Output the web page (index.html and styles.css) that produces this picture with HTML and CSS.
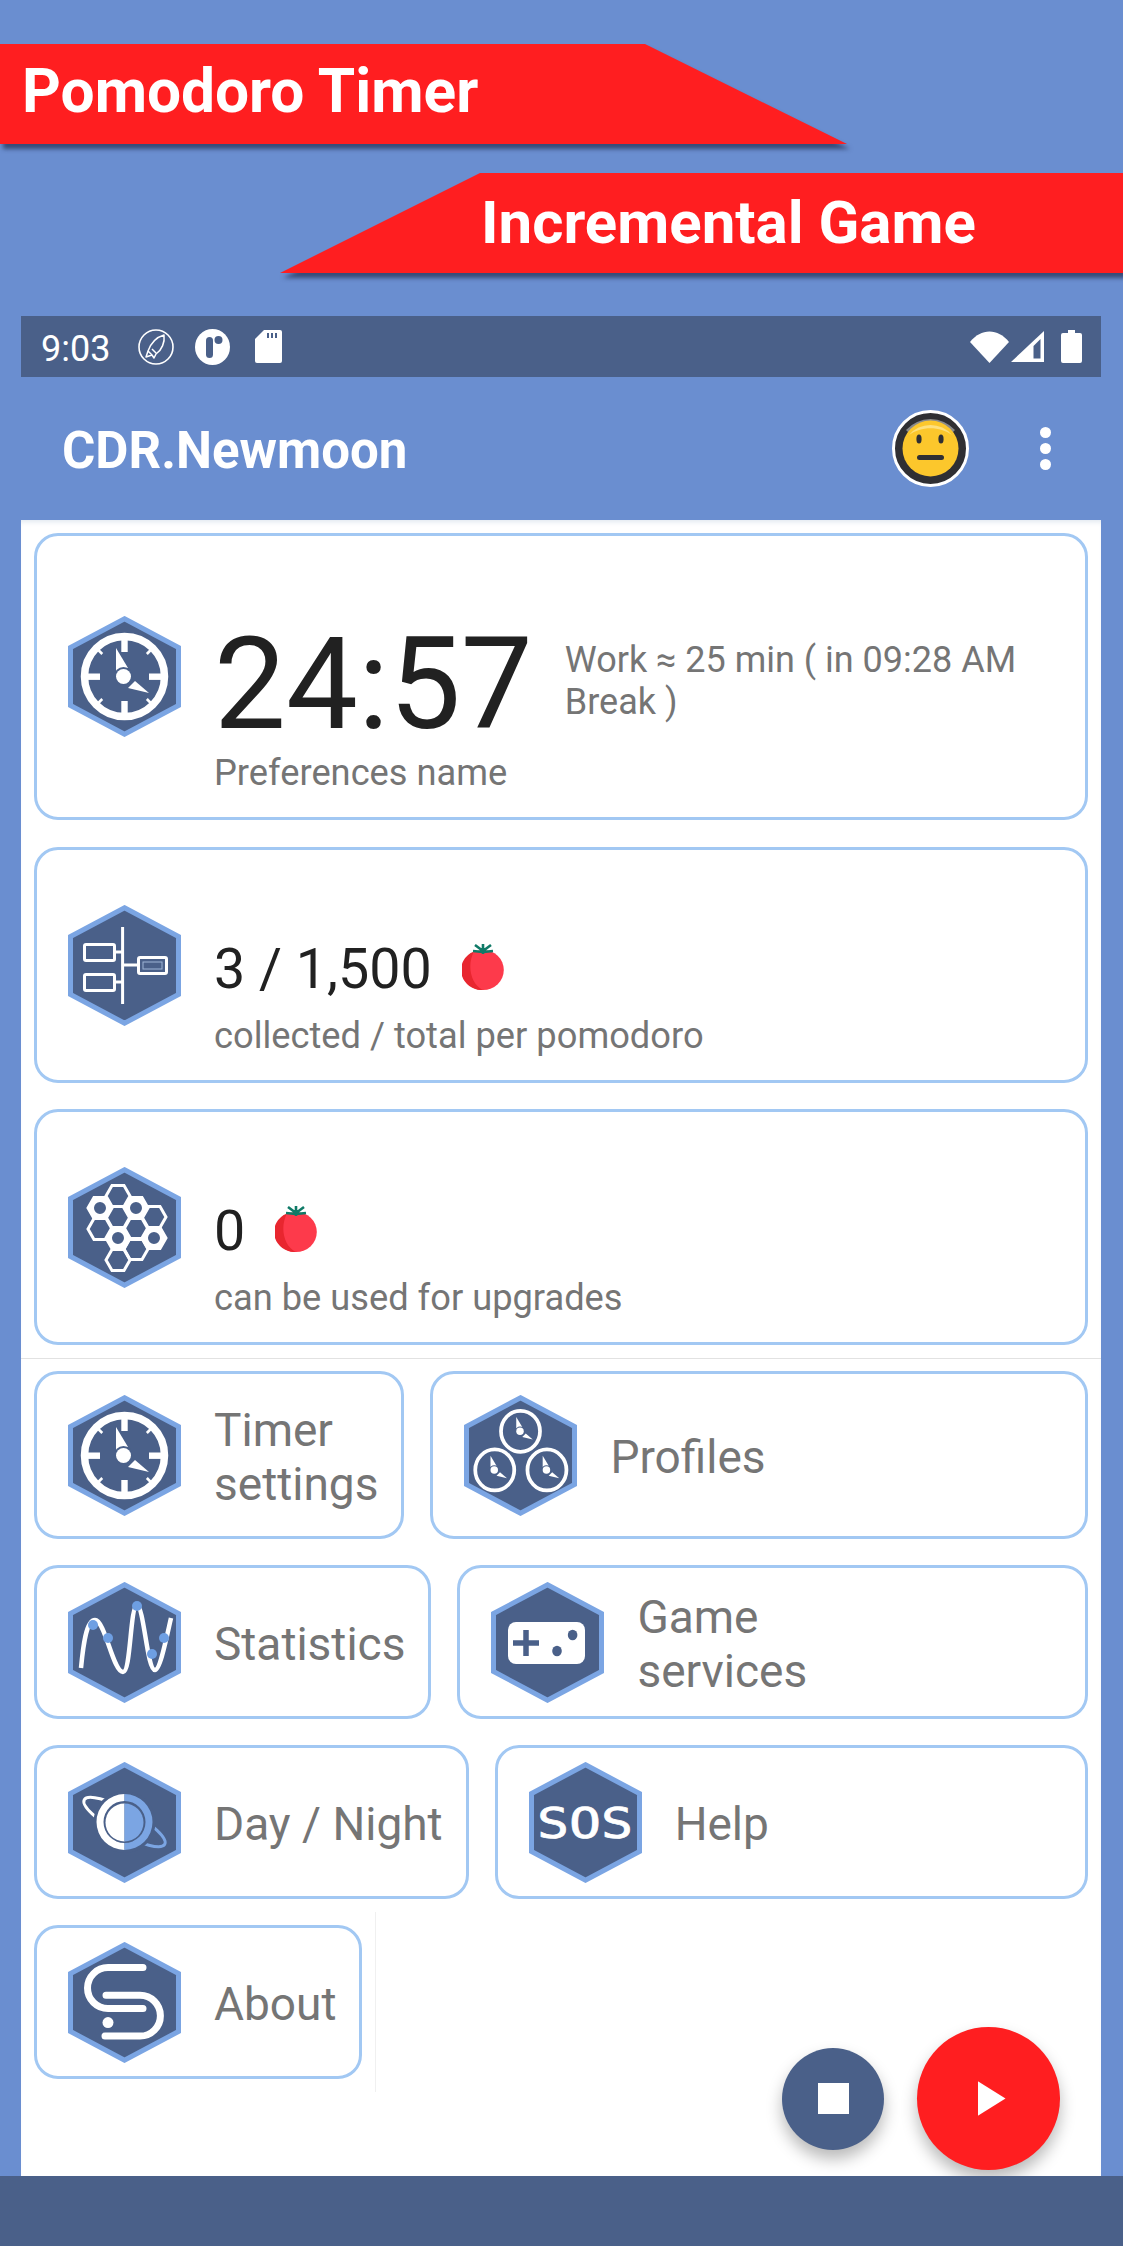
FILE: index.html
```html
<!DOCTYPE html>
<html lang="en">
<head>
<meta charset="utf-8">
<title>CDR.Newmoon</title>
<link rel="stylesheet" href="styles.css">
</head>
<body>
<svg class="sprites" width="0" height="0" aria-hidden="true">
  <defs>
    <symbol id="hex" viewBox="0 0 113 121">
      <polygon points="56.5,2.8 110.5,31.5 110.5,89.5 56.5,118.2 2.5,89.5 2.5,31.5" fill="#4a6089" stroke="#7ba5e3" stroke-width="5"/>
    </symbol>
    <g id="clock-hands">
      <g fill="#fff">
        <polygon points="48,32 60,52 48,55"/>
        <polygon points="81,77 67,65 60,72"/>
      </g>
      <circle cx="55.5" cy="60.5" r="9.5" fill="#4a6089"/>
      <circle cx="55.5" cy="60.5" r="7.5" fill="#fff"/>
    </g>
    <g id="clock-face">
      <circle cx="56.5" cy="60.5" r="40" fill="none" stroke="#fff" stroke-width="7.5"/>
      <g fill="#fff">
        <rect x="53.3" y="23" width="6.4" height="13"/>
        <rect x="53.3" y="85" width="6.4" height="13"/>
        <rect x="19" y="57.5" width="13" height="6.4"/>
        <rect x="81" y="57.5" width="13" height="6.4"/>
        <rect x="30.5" y="32" width="2.6" height="7" transform="rotate(-45 31.8 35.5)"/>
        <rect x="80" y="32" width="2.6" height="7" transform="rotate(45 81.3 35.5)"/>
        <rect x="30.5" y="82" width="2.6" height="7" transform="rotate(45 31.8 85.5)"/>
        <rect x="80" y="82" width="2.6" height="7" transform="rotate(-45 81.3 85.5)"/>
      </g>
      <use href="#clock-hands"/>
    </g>
    <g id="clock-mini">
      <ellipse cx="56.5" cy="60.5" rx="39" ry="41" fill="none" stroke="#fff" stroke-width="7.5"/>
      <use href="#clock-hands"/>
    </g>
    <symbol id="tomato" viewBox="0 0 42 48">
      <ellipse cx="21" cy="28" rx="20.8" ry="20" fill="#fd3a4b"/>
      <path d="M12 9.5A20.8 20 0 0 0 21 48 C 8 42 5 22 12 9.5Z" fill="#e8262f"/>
      <path d="M21 12V2M21 9L13 3M21 9L29 3M21 10L11 9M21 10L31 9" stroke="#0f7a67" stroke-width="2.6" fill="none"/>
    </symbol>
  </defs>
</svg>

<header class="promo">
  <div class="ribbon-shadow">
    <div class="ribbon ribbon-left">Pomodoro Timer</div>
  </div>
  <div class="ribbon-shadow">
    <div class="ribbon ribbon-right">Incremental Game</div>
  </div>
</header>

<div class="status-bar">
  <span class="clock">9:03</span>
  <svg class="st-rocket" viewBox="0 0 36 36">
    <circle cx="18" cy="18" r="17" fill="none" stroke="#fff" stroke-width="1.6"/>
    <path d="M26 6C19 8 13 14 10 22L8 28L14 26L16 29L18 25C24 21 27 13 26 6ZM14 20L18 24M10 22L14 26" fill="none" stroke="#fff" stroke-width="1.5" stroke-linejoin="round"/>
  </svg>
  <svg class="st-dot" viewBox="0 0 35 36">
    <ellipse cx="17.5" cy="18" rx="17.5" ry="18" fill="#fff"/>
    <rect x="11" y="8" width="7" height="21" rx="3.5" fill="#4a6089"/>
    <circle cx="23.5" cy="11" r="4" fill="#4a6089"/>
  </svg>
  <svg class="st-sd" viewBox="0 0 27 33">
    <path d="M9 0H25A2 2 0 0 1 27 2V31A2 2 0 0 1 25 33H2A2 2 0 0 1 0 31V9Z" fill="#fff"/>
    <path d="M13 3V8M17 3V8M21 3V8" stroke="#4a6089" stroke-width="2"/>
  </svg>
  <span class="status-spacer"></span>
  <svg class="st-wifi" viewBox="0 0 39 32">
    <path d="M0 11C11 -3 28 -3 39 11L19.5 32Z" fill="#fff"/>
  </svg>
  <svg class="st-signal" viewBox="0 0 33 31">
    <path d="M33 0V31H0Z" fill="#fff"/>
    <path d="M22.5 15V27.5H29.5V8Z" fill="#4a6089"/>
  </svg>
  <svg class="st-battery" viewBox="0 0 21 33">
    <path d="M7 0H14V3H19A2 2 0 0 1 21 5V31A2 2 0 0 1 19 33H2A2 2 0 0 1 0 31V5A2 2 0 0 1 2 3H7Z" fill="#fff"/>
  </svg>
</div>

<div class="app-bar">
  <h1 class="app-title">CDR.Newmoon</h1>
  <svg class="avatar" viewBox="0 0 77 77">
    <circle cx="38.5" cy="38.5" r="37" fill="#2f2f33" stroke="#fff" stroke-width="3"/>
    <path d="M14 20A33 33 0 0 1 63 20L55 28A24 24 0 0 0 22 28Z" fill="#8a8a8a"/>
    <circle cx="38.5" cy="38.5" r="28" fill="#fcc72c"/>
    <path d="M17 25A28 28 0 0 1 60 25C48 16 29 16 17 25Z" fill="#fde07e"/>
    <ellipse cx="27" cy="29" rx="2.6" ry="4.6" fill="#2f2f33"/>
    <ellipse cx="49" cy="29" rx="2.6" ry="4.6" fill="#2f2f33"/>
    <rect x="25" y="45" width="27" height="5" rx="2.5" fill="#2f2f33"/>
  </svg>
  <div class="overflow-menu"><i></i><i></i><i></i></div>
</div>

<main class="panel">
  <section class="stat-card stat-timer">
    <svg class="hex"><use href="#hex"/><use href="#clock-face"/></svg>
    <div class="stat-body">
      <div class="timer-row">
        <span class="timer-value">24:57</span>
        <span class="timer-note">Work ≈ 25 min ( in 09:28 AM Break )</span>
      </div>
      <p class="stat-sub timer-sub">Preferences name</p>
    </div>
  </section>

  <section class="stat-card stat-collected">
    <svg class="hex"><use href="#hex"/>
      <g fill="none" stroke="#fff" stroke-width="3">
        <path d="M54.6 22V99M46 47H54.6M46 77H54.6M54.6 60H70"/>
        <rect x="16.5" y="39.5" width="30" height="16" rx="1.5"/>
        <rect x="16.5" y="69.5" width="30" height="16" rx="1.5"/>
        <rect x="70.5" y="52.5" width="28" height="16" rx="1.5"/>
      </g>
      <rect x="75" y="57" width="19" height="7" fill="none" stroke="#9db4d6" stroke-width="1"/>
    </svg>
    <div class="stat-body">
      <div class="count-row">
        <span class="count-value">3 / 1,500</span>
        <svg class="tomato"><use href="#tomato"/></svg>
      </div>
      <p class="stat-sub">collected / total per pomodoro</p>
    </div>
  </section>

  <section class="stat-card">
    <svg class="hex"><use href="#hex"/>
      <g fill="none" stroke="#fff" stroke-width="3">
        <path d="M38 29L44 18.6H56L62 29L56 39.4H44Z"/>
        <path d="M38 50L44 39.6H56L62 50L56 60.4H44Z"/>
        <path d="M38 71L44 60.6H56L62 71L56 81.4H44Z"/>
        <path d="M38 93L44 82.6H56L62 93L56 103.4H44Z"/>
        <path d="M20 41L26 30.6H38L44 41L38 51.4H26Z"/>
        <path d="M20 62L26 51.6H38L44 62L38 72.4H26Z"/>
        <path d="M56 41L62 30.6H74L80 41L74 51.4H62Z"/>
        <path d="M56 62L62 51.6H74L80 62L74 72.4H62Z"/>
        <path d="M56 82L62 71.6H74L80 82L74 92.4H62Z"/>
        <path d="M74 50L80 39.6H92L98 50L92 60.4H80Z"/>
        <path d="M74 71L80 60.6H92L98 71L92 81.4H80Z"/>
      </g>
      <g fill="#fff">
        <path d="M20 41L26 30.6H38L44 41L38 51.4H26ZM32 35A6 6 0 1 0 32 47A6 6 0 1 0 32 35Z" fill-rule="evenodd"/>
        <path d="M56 41L62 30.6H74L80 41L74 51.4H62ZM68 35A6 6 0 1 0 68 47A6 6 0 1 0 68 35Z" fill-rule="evenodd"/>
        <path d="M38 71L44 60.6H56L62 71L56 81.4H44ZM50 65A6 6 0 1 0 50 77A6 6 0 1 0 50 65Z" fill-rule="evenodd"/>
        <path d="M74 71L80 60.6H92L98 71L92 81.4H80ZM86 65A6 6 0 1 0 86 77A6 6 0 1 0 86 65Z" fill-rule="evenodd"/>
      </g>
    </svg>
    <div class="stat-body">
      <div class="count-row">
        <span class="count-value">0</span>
        <svg class="tomato"><use href="#tomato"/></svg>
      </div>
      <p class="stat-sub">can be used for upgrades</p>
    </div>
  </section>

  <hr class="divider">

  <nav class="menu">
    <div class="menu-row">
      <a class="tile tile-tall">
        <svg class="hex"><use href="#hex"/><use href="#clock-face"/></svg>
        <span class="tile-label">Timer<br>settings</span>
      </a>
      <a class="tile tile-tall tile-fill">
        <svg class="hex"><use href="#hex"/>
          <use href="#clock-mini" transform="translate(28.25 6) scale(.5)"/>
          <use href="#clock-mini" transform="translate(2.5 44.7) scale(.5)"/>
          <use href="#clock-mini" transform="translate(54.7 44.7) scale(.5)"/>
        </svg>
        <span class="tile-label">Profiles</span>
      </a>
    </div>
    <div class="menu-row">
      <a class="tile">
        <svg class="hex"><use href="#hex"/>
          <path d="M13 86C15 65 18 38 27 38C37 38 45 90 55 90C63 90 62 24 69 24C76 24 79 88 87 88C92 88 98 58 103 36" fill="none" stroke="#fff" stroke-width="4.5"/>
          <g fill="#6e9fe3">
            <circle cx="25" cy="43" r="5"/><circle cx="40" cy="56" r="5"/><circle cx="69" cy="24" r="5"/><circle cx="84" cy="72" r="5"/><circle cx="96" cy="56" r="5"/>
          </g>
        </svg>
        <span class="tile-label">Statistics</span>
      </a>
      <a class="tile tile-fill">
        <svg class="hex"><use href="#hex"/>
          <rect x="17" y="40" width="77" height="42" rx="8" fill="#fff"/>
          <path d="M22 61H48M35 48V74" stroke="#4a6089" stroke-width="5.5" fill="none"/>
          <ellipse cx="81.6" cy="53" rx="4.8" ry="5.2" fill="#4a6089"/>
          <ellipse cx="66" cy="69" rx="4.8" ry="5.2" fill="#4a6089"/>
        </svg>
        <span class="tile-label">Game<br>services</span>
      </a>
    </div>
    <div class="menu-row">
      <a class="tile">
        <svg class="hex"><use href="#hex"/>
          <g transform="rotate(29 56.5 60)" fill="none" stroke-width="3">
            <path d="M56.5 48A46 12 0 0 0 10.5 60A46 12 0 0 0 56.5 72" stroke="#fff"/>
            <path d="M56.5 48A46 12 0 0 1 102.5 60A46 12 0 0 1 56.5 72" stroke="#7ba5e3"/>
          </g>
          <circle cx="56.5" cy="60" r="31" fill="#4a6089"/>
          <path d="M56.5 32A28 28 0 0 0 56.5 88V81A21 21 0 0 1 56.5 39Z" fill="#fff"/>
          <path d="M56.5 32A28 28 0 0 1 56.5 88V81A21 21 0 0 0 56.5 39Z" fill="#7ba5e3"/>
          <path d="M56.5 41.5A19 19 0 0 0 56.5 79.5Z" fill="#fff"/>
          <path d="M56.5 41.5A19 19 0 0 1 56.5 79.5Z" fill="#7ba5e3"/>
        </svg>
        <span class="tile-label">Day / Night</span>
      </a>
      <a class="tile tile-fill">
        <svg class="hex"><use href="#hex"/>
          <text class="sos-text" x="8" y="76" textLength="96" lengthAdjust="spacingAndGlyphs">SOS</text>
        </svg>
        <span class="tile-label">Help</span>
      </a>
    </div>
    <div class="menu-row">
      <a class="tile">
        <svg class="hex"><use href="#hex"/>
          <g fill="none" stroke="#fff" stroke-width="7" stroke-linecap="round">
            <path d="M75 25.6H40A20.5 20.5 0 0 0 40 66.6H75"/>
            <path d="M38 53.3H72A20.4 20.4 0 0 1 72 94.1H37"/>
          </g>
          <circle cx="40" cy="80.6" r="5.5" fill="#fff"/>
        </svg>
        <span class="tile-label">About</span>
      </a>
      <span class="menu-rule"></span>
    </div>
  </nav>

  <div class="fabs">
    <button class="fab fab-stop" type="button"><i class="stop-glyph"></i></button>
    <button class="fab fab-play" type="button"><i class="play-glyph"></i></button>
  </div>
</main>

<footer class="nav-bar"></footer>
</body>
</html>
```

FILE: styles.css
```css
* { box-sizing: border-box; }

html, body { height: 100%; }

body {
  margin: 0;
  width: 1123px;
  height: 2246px;
  overflow: hidden;
  display: flex;
  flex-direction: column;
  background: #6a8ed0;
  font-family: Roboto, "Liberation Sans", sans-serif;
  color: #212121;
}

.sprites { position: absolute; }

/* Promo ribbons */
.promo {
  flex: none;
  padding-top: 44px;
  display: flex;
  flex-direction: column;
  gap: 29px;
}

.ribbon-shadow { filter: drop-shadow(3px 5px 2px rgba(20, 30, 60, .6)); }

.ribbon {
  height: 100px;
  background: #ff1e20;
  color: #fff;
  font-weight: 700;
  font-size: 60.4px;
  line-height: 96px;
}

.ribbon-left {
  width: 847px;
  padding-left: 22px;
  clip-path: polygon(0 0, 645px 0, 100% 100%, 0 100%);
}

.ribbon-right {
  margin-left: 280px;
  padding-left: 201px;
  font-size: 60px;
  line-height: 100px;
  clip-path: polygon(200px 0, 100% 0, 100% 100%, 0 100%);
}

/* Device status bar */
.status-bar {
  flex: none;
  height: 61px;
  margin: 43px 22px 0 21px;
  padding: 0 19px 0 20px;
  display: flex;
  align-items: center;
  background: #4a6089;
  color: #fff;
}

.clock { font-size: 36px; padding-top: 4px; margin-right: 28px; }
.status-spacer { flex: 1; }
.st-rocket { width: 36px; height: 36px; margin-right: 21px; }
.st-dot { width: 35px; height: 36px; margin-right: 25px; }
.st-sd { width: 27px; height: 33px; }
.st-wifi { width: 39px; height: 32px; margin-right: 2px; }
.st-signal { width: 33px; height: 31px; margin-right: 17px; }
.st-battery { width: 21px; height: 33px; }

/* App bar */
.app-bar {
  flex: none;
  height: 143px;
  padding: 0 72px 0 62px;
  display: flex;
  align-items: center;
}

.app-title {
  flex: 1;
  margin: 0;
  padding-top: 3px;
  color: #fff;
  font-size: 51px;
  font-weight: 700;
}

.avatar { width: 77px; height: 77px; margin-right: 71px; }

.overflow-menu {
  display: flex;
  flex-direction: column;
  gap: 5px;
}

.overflow-menu i {
  width: 11px;
  height: 11px;
  border-radius: 50%;
  background: #fff;
}

/* Main content sheet */
.panel {
  position: relative;
  flex: 1;
  min-height: 0;
  overflow: hidden;
  margin: 0 22px 0 21px;
  padding: 13px 13px 0;
  background: #fff;
  display: flex;
  flex-direction: column;
  box-shadow: inset 0 5px 5px -3px rgba(90, 130, 170, .18);
}

.hex {
  flex: none;
  width: 113px;
  height: 121px;
  margin-left: 31px;
}

.stat-card {
  height: 236px;
  margin-bottom: 27px;
  display: flex;
  align-items: center;
  border: 3px solid #a2c8f3;
  border-radius: 24px;
}

.stat-timer { height: 287px; }
.stat-collected { margin-bottom: 26px; }

.stat-body {
  flex: 1;
  align-self: flex-end;
  margin-left: 33px;
  padding-bottom: 23px;
}

.timer-row {
  display: flex;
  align-items: center;
}

.timer-value {
  flex: none;
  font-size: 128px;
  line-height: 128px;
  margin-right: 32px;
}

.timer-note {
  font-size: 36px;
  line-height: 42px;
  color: #757575;
  padding: 0 50px 6px 0;
}

.stat-sub {
  margin: 13px 0 0;
  font-size: 36.25px;
  line-height: 42px;
  color: #757575;
}

.timer-sub { margin-top: 4px; }

.count-row {
  display: flex;
  align-items: center;
  gap: 30px;
}

.count-value { font-size: 55.6px; line-height: 66px; }

.tomato { width: 42px; height: 48px; margin-top: -6px; }

.divider {
  flex: none;
  align-self: stretch;
  height: 1px;
  margin: -14px -13px 12px;
  border: 0;
  background: #e2e2e2;
}

/* Menu tiles */
.menu {
  display: flex;
  flex-direction: column;
  gap: 26px;
}

.menu-row {
  display: flex;
  align-items: stretch;
  gap: 26px;
}

.tile {
  display: flex;
  align-items: center;
  min-height: 154px;
  padding: 12px 23px 12px 0;
  border: 3px solid #a2c8f3;
  border-radius: 24px;
}

.tile-tall { min-height: 168px; }
.tile-fill { flex: 1; }

.tile-label {
  margin-left: 33px;
  padding-top: 4px;
  font-size: 46px;
  line-height: 54px;
  color: #757575;
}

.sos-text {
  font-family: "DejaVu Sans Mono", monospace;
  font-size: 42px;
  fill: #fff;
  stroke: #fff;
  stroke-width: .7px;
}

.menu-rule {
  width: 1px;
  margin: -13px 0 -13px -13px;
  background: #f0f0f0;
}

/* Floating actions */
.fabs {
  position: absolute;
  right: 41px;
  bottom: 6px;
  display: flex;
  align-items: center;
  gap: 33px;
}

.fab {
  padding: 0;
  border: 0;
  border-radius: 50%;
  display: flex;
  align-items: center;
  justify-content: center;
  box-shadow: 0 9px 16px rgba(0, 0, 0, .28);
}

.fab-stop { width: 102px; height: 102px; background: #4a6089; }
.fab-play { width: 143px; height: 143px; background: #ff1e20; }

.stop-glyph { width: 31px; height: 31px; background: #fff; }

.play-glyph {
  width: 28px;
  height: 35px;
  margin-left: 6px;
  background: #fff;
  clip-path: polygon(0 0, 100% 50%, 0 100%);
}

.nav-bar {
  flex: none;
  height: 70px;
  background: #4a6089;
}
```
